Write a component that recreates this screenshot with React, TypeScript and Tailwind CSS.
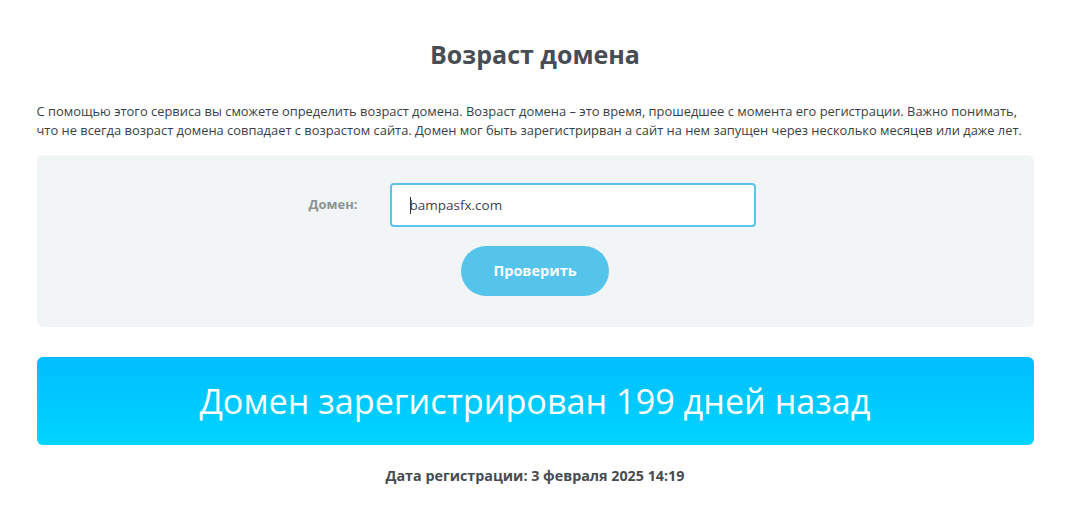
export default function App() {
  return (
    <main className="min-h-[516px] bg-white font-['Open_Sans',sans-serif]">
      <div className="mx-auto w-[997px] pt-[37px]">
        <h1 className="text-center text-[25px] font-bold leading-[34px] text-[#484d54]">
          Возраст домена
        </h1>

        <p className="mt-[31px] text-[12.9px] leading-[19px] text-[#3a3f45]">
          С помощью этого сервиса вы сможете определить возраст домена. Возраст
          домена – это время, прошедшее с момента его регистрации. Важно понимать,
          <br />
          что не всегда возраст домена совпадает с возрастом сайта. Домен мог быть
          зарегистрирван а сайт на нем запущен через несколько месяцев или даже лет.
        </p>

        <section className="mt-[15px] rounded-md bg-[#f2f5f6] pt-[28px] pb-[31px]">
          <div className="flex items-center">
            <label className="w-[321px] text-right text-[13px] font-bold text-[#8c9191]">
              Домен:
            </label>
            <div className="ml-8 flex h-[44px] w-[366px] items-center rounded-[4px] border-2 border-[#5cc3ea] bg-white pl-[18px] text-[13.5px] text-[#3f444a]">
              <span className="mr-[-1px] h-[17px] w-px bg-[#333]" />
              bampasfx.com
            </div>
          </div>
          <div className="mt-[19px] flex justify-center">
            <button className="h-[50px] w-[148px] rounded-full bg-[#55c4eb] text-[14.5px] font-bold text-white">
              Проверить
            </button>
          </div>
        </section>

        <div className="mt-[30px] flex h-[88px] items-center justify-center rounded-md bg-gradient-to-b from-[#00bdff] to-[#00d5ff]">
          <span className="text-[34.2px] font-normal text-white">
            Домен зарегистрирован 199 дней назад
          </span>
        </div>

        <p className="mt-[20px] text-center text-[14.3px] font-bold text-[#474c53]">
          Дата регистрации: 3 февраля 2025 14:19
        </p>
      </div>
    </main>
  );
}
